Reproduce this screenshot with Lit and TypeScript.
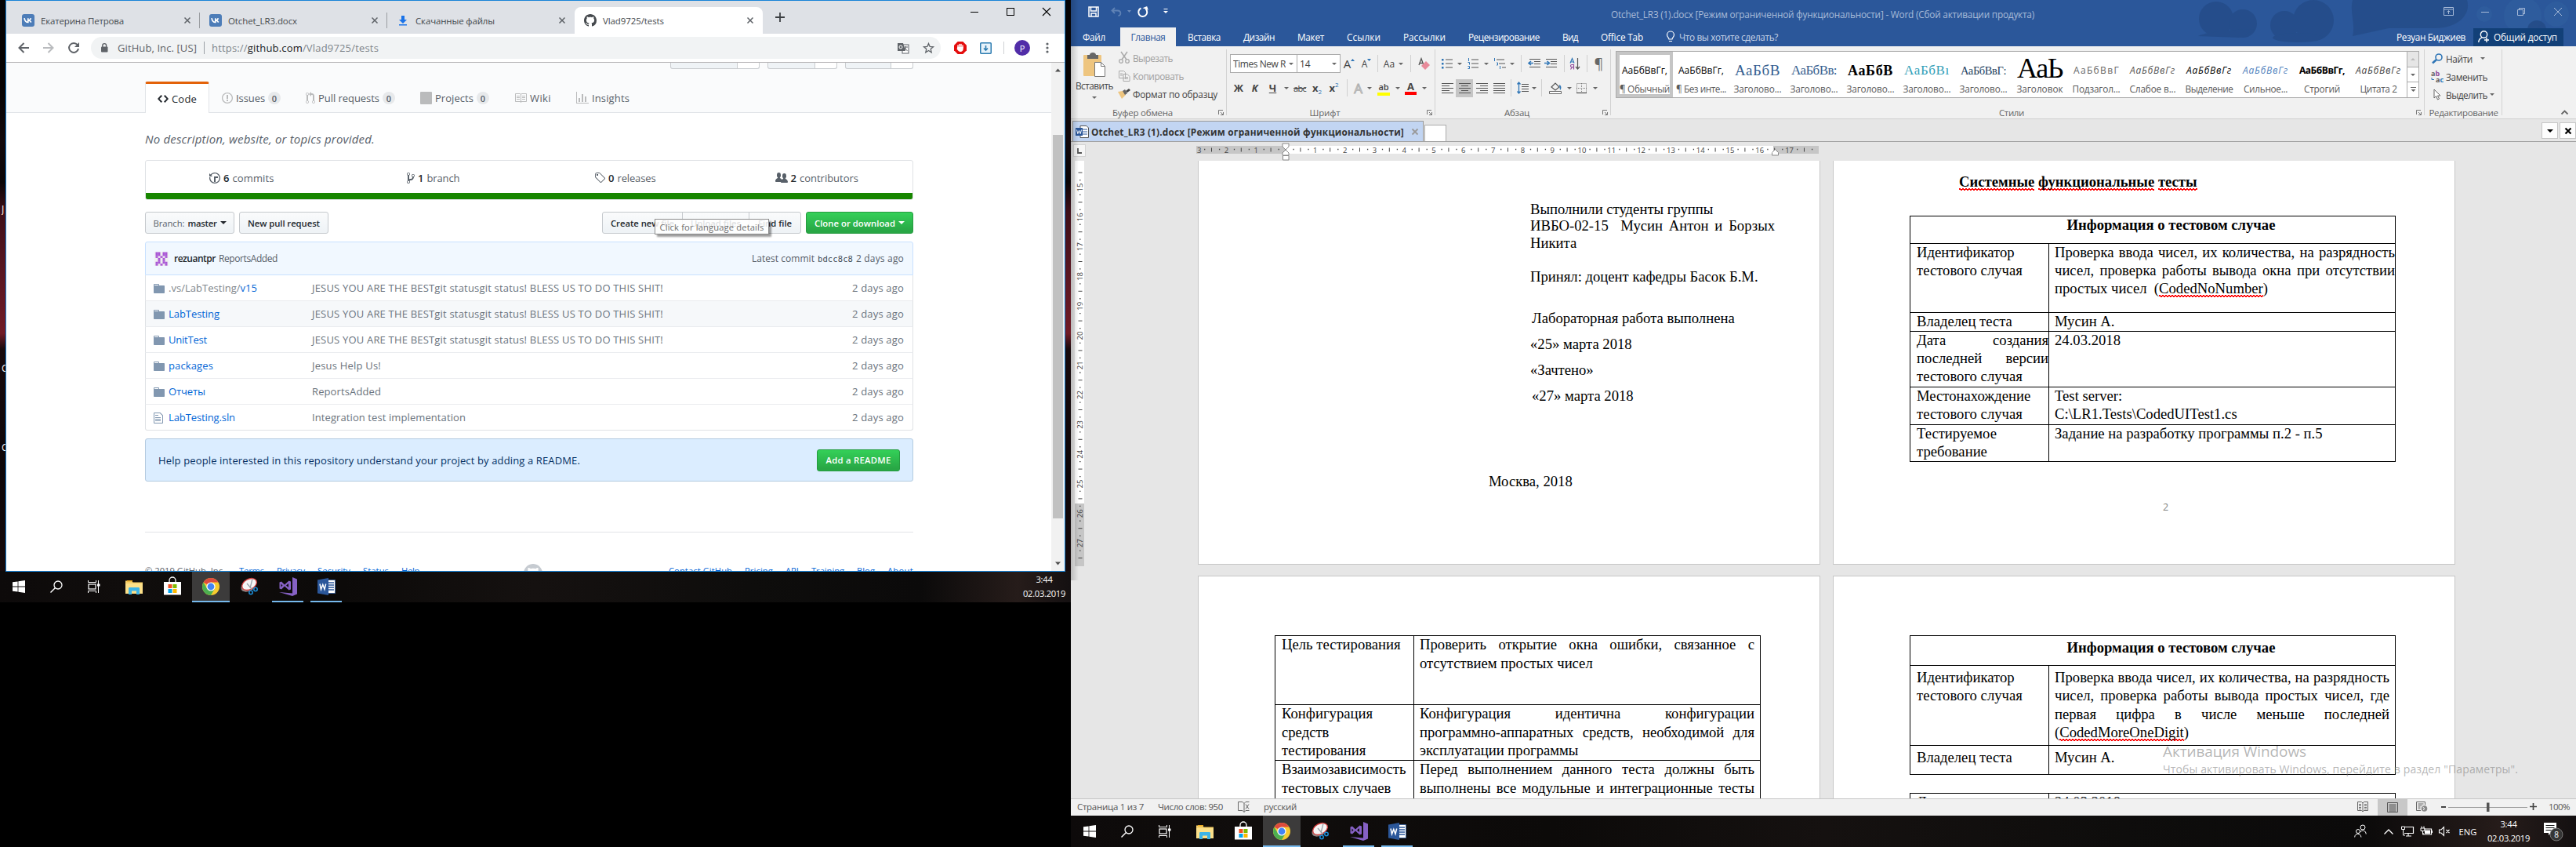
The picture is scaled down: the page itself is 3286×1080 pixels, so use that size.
import { LitElement, html, svg, css, nothing } from "lit";
import { customElement, property } from "lit/decorators.js";

/* ---------- shared helpers ---------- */

const base = css`
  * { box-sizing: border-box; }
  .row { display: flex; align-items: center; }
  .col { display: flex; flex-direction: column; }
  .grow { flex: 1; }
  .cell { display: flex; align-items: center; justify-content: center; flex: none; }
  svg { display: block; flex: none; overflow: visible; }
  .gap { flex: none; }
`;

/** Text whose tracking is adjusted so that it fills exactly `w` pixels. */
@customElement("fit-text")
class FitText extends LitElement {
  static styles = css`
    :host { display: inline-block; white-space: pre; flex: none; text-align: left; }
    .in { display: inline-block; }
  `;
  @property({ attribute: false }) w = 0;
  firstUpdated() {
    const el = this.renderRoot.querySelector(".in") as HTMLElement;
    const n = (this.textContent || "").length;
    const nat = el.getBoundingClientRect().width;
    if (this.w && n > 1) {
      el.style.letterSpacing = `${(this.w - nat) / n}px`;
      this.style.width = `${this.w}px`;
    }
  }
  render() {
    return html`<span class="in"><slot></slot></span>`;
  }
}

const t = (w: number, s: unknown, cls = "") => html`<fit-text .w=${w} class=${cls}>${s}</fit-text>`;
const cell = (w: number, c: unknown = nothing, cls = "") =>
  html`<span class="cell ${cls}" style="width:${w}px">${c}</span>`;
const gap = (w: number) => html`<span class="gap" style="width:${w}px"></span>`;
const ic = (w: number, h: number, c: unknown, cls = "") =>
  html`<svg class=${cls} width=${w} height=${h} viewBox="0 0 ${w} ${h}" fill="none">${c}</svg>`;
const oct = (w: number, d: string, cls = "") =>
  html`<svg class=${cls} width=${w} height="16" viewBox="0 0 ${w} 16" fill="currentColor"><path d=${d}></path></svg>`;

const O = {
  code: "M9.5 3L8 4.5 11.5 8 8 11.5 9.5 13 14 8 9.5 3zm-5 0L0 8l4.5 5L6 11.5 2.5 8 6 4.5 4.5 3z",
  issue: "M7 2.3c3.14 0 5.7 2.56 5.7 5.7s-2.56 5.7-5.7 5.7A5.71 5.71 0 0 1 1.3 8c0-3.14 2.56-5.7 5.7-5.7zM7 1C3.14 1 0 4.14 0 8s3.14 7 7 7 7-3.14 7-7-3.14-7-7-7zm1 3H6v5h2V4zm0 6H6v2h2v-2z",
  pr: "M11 11.28V5c-.03-.78-.34-1.47-.94-2.06C9.46 2.35 8.78 2.03 8 2H7V0L4 3l3 3V4h1c.27.02.48.11.69.31.21.2.3.42.31.69v6.28A1.993 1.993 0 0 0 10 15a1.993 1.993 0 0 0 1-3.72zm-1 2.92c-.66 0-1.2-.55-1.2-1.2 0-.65.55-1.2 1.2-1.2.65 0 1.2.55 1.2 1.2 0 .65-.55 1.2-1.2 1.2zM4 3c0-1.11-.89-2-2-2a1.993 1.993 0 0 0-1 3.72v6.56A1.993 1.993 0 0 0 2 15a1.993 1.993 0 0 0 1-3.72V4.72c.59-.34 1-.98 1-1.72zm-.8 10c0 .66-.55 1.2-1.2 1.2-.65 0-1.2-.55-1.2-1.2 0-.65.55-1.2 1.2-1.2.65 0 1.2.55 1.2 1.2zM2 4.2C1.34 4.2.8 3.65.8 3c0-.65.55-1.2 1.2-1.2.65 0 1.2.55 1.2 1.2 0 .65-.55 1.2-1.2 1.2z",
  project: "M10 12h3V2h-3v10zm-4-2h3V2H6v8zm-4 4h3V2H2v12zm-1 1h13V1H1v14zM14 0H1a1 1 0 0 0-1 1v14a1 1 0 0 0 1 1h13a1 1 0 0 0 1-1V1a1 1 0 0 0-1-1z",
  book: "M3 5h4v1H3V5zm0 3h4V7H3v1zm0 2h4V9H3v1zm11-5h-4v1h4V5zm0 2h-4v1h4V7zm0 2h-4v1h4V9zm2-6v9c0 .55-.45 1-1 1H9.5l-1 1-1-1H2c-.55 0-1-.45-1-1V3c0-.55.45-1 1-1h5.5l1 1 1-1H15c.55 0 1 .45 1 1zm-8 .5L7.5 3H2v9h6V3.5zm7-.5H9.5l-.5.5V12h6V3z",
  graph: "M16 14v1H0V0h1v14h15zM5 13H3V8h2v5zm4 0H7V3h2v10zm4 0h-2V6h2v7z",
  history: "M8 13H6V6h5v2H8v5zM7 1C4.81 1 2.87 2.02 1.59 3.59L0 2v4h4L2.5 4.5C3.55 3.17 5.17 2.3 7 2.3c3.14 0 5.7 2.56 5.7 5.7s-2.56 5.7-5.7 5.7A5.71 5.71 0 0 1 1.3 8c0-.34.03-.67.09-1H.08C.03 7.33 0 7.66 0 8c0 3.86 3.14 7 7 7s7-3.14 7-7-3.14-7-7-7z",
  branch: "M10 5c0-1.11-.89-2-2-2a1.993 1.993 0 0 0-1 3.72v.3c-.02.52-.23.98-.63 1.38-.4.4-.86.61-1.38.63-.83.02-1.48.16-2 .45V4.72a1.993 1.993 0 0 0-1-3.72C.88 1 0 1.89 0 3a2 2 0 0 0 1 1.72v6.56c-.59.35-1 .99-1 1.72 0 1.11.89 2 2 2 1.11 0 2-.89 2-2 0-.53-.2-1-.53-1.36.09-.06.48-.41.59-.47.25-.11.56-.17.94-.17 1.05-.05 1.95-.45 2.75-1.25S8.95 7.77 9 6.73h-.02C9.59 6.37 10 5.73 10 5zM2 1.8c.66 0 1.2.55 1.2 1.2 0 .65-.55 1.2-1.2 1.2C1.35 4.2.8 3.65.8 3c0-.65.55-1.2 1.2-1.2zm0 12.41c-.66 0-1.2-.55-1.2-1.2 0-.65.55-1.2 1.2-1.2.65 0 1.2.55 1.2 1.2 0 .65-.55 1.2-1.2 1.2zm6-8c-.66 0-1.2-.55-1.2-1.2 0-.65.55-1.2 1.2-1.2.65 0 1.2.55 1.2 1.2 0 .65-.55 1.2-1.2 1.2z",
  tag: "M7.685 1.72a2.49 2.49 0 0 0-1.76-.726H3.48A2.5 2.5 0 0 0 .994 3.48v2.456c0 .656.269 1.292.726 1.76l6.024 6.024a.99.99 0 0 0 1.402 0l4.563-4.563a.99.99 0 0 0 0-1.402L7.685 1.72zM2.366 7.048a1.54 1.54 0 0 1-.467-1.123V3.48c0-.874.716-1.58 1.58-1.58h2.456c.418 0 .825.159 1.123.467l6.104 6.094-4.702 4.702-6.094-6.114zm.626-4.066h1.989v1.989H2.982V2.982h.01z",
  org: "M16 12.999c0 .439-.45 1-1 1H7.995c-.539 0-.994-.447-.995-.999H1c-.54 0-1-.561-1-1 0-2.634 3-4 3-4s.229-.409 0-1c-.841-.621-1.058-.59-1-3 .058-2.419 1.367-3 2.5-3s2.442.58 2.5 3c.058 2.41-.159 2.379-1 3-.229.59 0 1 0 1s1.549.711 2.42 2.088C9.196 9.369 10 8.999 10 8.999s.229-.409 0-1c-.841-.62-1.058-.59-1-3 .058-2.419 1.367-3 2.5-3s2.437.581 2.495 3c.059 2.41-.158 2.38-1 3-.229.59 0 1 0 1s3.005 1.366 3.005 4z",
  dir: "M13 4H7V3c0-.66-.31-1-1-1H1c-.55 0-1 .45-1 1v10c0 .55.45 1 1 1h12c.55 0 1-.45 1-1V5c0-.55-.45-1-1-1zM6 4H1V3h5v1z",
  file: "M6 5H2V4h4v1zM2 8h7V7H2v1zm0 2h7V9H2v1zm0 2h7v-1H2v1zm10-7.5V14c0 .55-.45 1-1 1H1c-.55 0-1-.45-1-1V2c0-.55.45-1 1-1h7.5L12 4.5zM11 5L8 2H1v12h10V5z",
  mark: "M8 0C3.58 0 0 3.58 0 8c0 3.54 2.29 6.53 5.47 7.59.4.07.55-.17.55-.38 0-.19-.01-.82-.01-1.49-2.01.37-2.53-.49-2.69-.94-.09-.23-.48-.94-.82-1.13-.28-.15-.68-.52-.01-.53.63-.01 1.08.58 1.23.82.72 1.21 1.87.87 2.33.66.07-.52.28-.87.51-1.07-1.78-.2-3.64-.89-3.64-3.95 0-.87.31-1.59.82-2.15-.08-.2-.36-1.02.08-2.12 0 0 .67-.21 2.2.82.64-.18 1.32-.27 2-.27.68 0 1.36.09 2 .27 1.53-1.04 2.2-.82 2.2-.82.44 1.1.16 1.92.08 2.12.51.56.82 1.27.82 2.15 0 3.07-1.87 3.75-3.65 3.95.29.25.54.73.54 1.48 0 1.07-.01 1.93-.01 2.2 0 .21.15.46.55.38A8.013 8.013 0 0 0 16 8c0-4.42-3.58-8-8-8z",
};

/* ---------- Chrome window ---------- */

@customElement("chrome-window")
class ChromeWindow extends LitElement {
  static styles = [base, css`
    :host { display: flex; flex-direction: column; box-sizing: border-box; border: 1px solid #1883d7; background: #fff;
      font: 13px "Open Sans", "Noto Sans", sans-serif; color: #24292e; overflow: hidden; }
    .strip { display: flex; height: 42px; background: #dee1e6; padding-left: 8px; flex: none; }
    .tab { display: flex; align-items: center; width: 239px; height: 34px; margin-top: 8px; padding: 0 10px 0 12px;
      font-size: 11.5px; color: #45494d; }
    .tab.sep { background: linear-gradient(#9a9da1, #9a9da1) right center / 1px 20px no-repeat; }
    .tab.on { background: #fff; border-radius: 8px 8px 0 0; width: 240px; }
    .tab fit-text { margin-left: 8px; }
    .wb { display: flex; margin-left: auto; height: 28px; align-items: center; }
    .bar { display: flex; align-items: center; height: 36px; padding-left: 6px; flex: none; background: #fff; }
    .line { height: 1px; background: #b6b4b6; flex: none; }
    .omni { display: flex; align-items: center; width: 1084px; height: 28px; border-radius: 14px; background: #f1f3f4;
      margin-left: 6px; margin-right: 9px; font-size: 13px; color: #5f6368; }
    .osep { width: 1px; height: 16px; background: #9aa0a6; margin: 0 9px; }
    .lt { color: #80868b; } .dk { color: #202124; }
    .vsep { width: 1px; height: 16px; background: #cfd1d4; }
    .ava { width: 20px; height: 20px; border-radius: 10px; background: #512da8; color: #fff; font-size: 11px;
      display: flex; align-items: center; justify-content: center; }
    .view { display: flex; flex: 1; min-height: 0; }
    .page { flex: 1; overflow: hidden; }
    .scroll { width: 17px; background: #f1f1f1; display: flex; flex-direction: column; align-items: center; padding: 7px 0; }
    .thumb { width: 13px; height: 489px; background: #c1c1c1; margin-top: 80px; margin-bottom: auto; }
    .head { height: 64px; background: #fafbfc; border-bottom: 1px solid #e1e4e8; display: flex; flex-direction: column;
      justify-content: space-between; }
    .wrap { width: 980px; margin-left: 177px; }
    .stubs { display: flex; justify-content: flex-end; gap: 10px; height: 8px; }
    .stub { border: 1px solid #c9cccf; border-top: 0; border-radius: 0 0 3px 3px; display: flex; height: 8px; background: #eff3f6; }
    .stub i { width: 28px; margin-left: auto; background: #fff; border-left: 1px solid #c9cccf; border-radius: 0 0 3px 0; }
    .nav { display: flex; margin-bottom: -1px; height: 40px; color: #586069; }
    .nav .it { display: flex; align-items: center; padding: 2px 16px 0; gap: 4px; }
    .nav svg { color: #babbbc; }
    .nav .it.on { background: #fff; border: 1px solid #e1e4e8; border-bottom: 0; border-top: 3px solid #e36209; padding: 0 15px;
      border-radius: 3px 3px 0 0; color: #24292e; }
    .nav .it.on svg { color: #24292e; }
    .cnt { width: 16px; height: 16px; border-radius: 8px; background: #e7e9eb; font-size: 11px; font-weight: 600;
      display: flex; align-items: center; justify-content: center; }
    .desc { margin-top: 21px; height: 24px; line-height: 24px; font-size: 15px; font-style: italic; color: #586069; }
    .stats { margin-top: 15px; height: 51px; border: 1px solid #dfe2e5; border-radius: 3px; overflow: hidden; }
    .stats .r { display: flex; height: 41px; color: #586069; }
    .stats .s { flex: 1; display: flex; align-items: center; justify-content: center; gap: 4px; padding-top: 3px; }
    .stats b { font-weight: 600; color: #24292e; }
    .lang { height: 8px; background: #178600; }
    .btns { margin-top: 15px; display: flex; height: 28px; position: relative; }
    .btn { display: flex; align-items: center; justify-content: center; height: 28px; border: 1px solid #c5c9cd; border-radius: 3px; gap: 4px;
      background: linear-gradient(#fafbfc, #eff3f6 90%); font-size: 11.3px; font-weight: 600; color: #24292e; }
    .btn.g { color: #fff; border-color: #269b40; background: linear-gradient(#34d058, #28a745 90%); }
    .btn .m { font-weight: 400; color: #586069; }
    .b1 { width: 114px; margin-right: 6px; } .b2 { width: 114px; margin-right: auto; }
    .b3 { width: 103px; border-radius: 3px 0 0 3px; } .b4 { width: 86px; border-radius: 0; margin-left: -1px; }
    .b5 { width: 67px; border-radius: 0 3px 3px 0; margin-left: -1px; } .b6 { width: 137px; margin-left: 6px; }
    .tip { position: absolute; left: 650px; top: 9px; width: 146px; height: 20px; border: 1px solid #8d8d8d; background: rgba(255,255,255,.86);
      box-shadow: 3px 3px 2px rgba(0,0,0,.38); font-size: 11.2px; color: #6d6d6d; display: flex; align-items: center; justify-content: center; }
    .commit { margin-top: 10px; height: 43px; border: 1px solid #c8e1ff; border-radius: 3px 3px 0 0; background: #f1f8ff; display: flex;
      align-items: center; padding: 0 11px; font-size: 12px; color: #586069; }
    .commit b { font-weight: 600; color: #24292e; }
    .mono { font-family: "DejaVu Sans Mono", monospace; font-size: 10.5px; color: #444d56; margin: 0 4px; }
    .f { display: flex; align-items: center; height: 33px; border: 1px solid #dfe2e5; border-top: 0; padding: 0 11px 0 10px; color: #6a737d;
      border-bottom-color: #eaecef; }
    .f.h { background: #f6f8fa; }
    .f.z { border-bottom-color: #dfe2e5; border-radius: 0 0 3px 3px; }
    .f svg { color: #8197b0; margin-top: 1px; }
    .f .n { width: 202px; display: flex; align-items: center; color: #0366d6; }
    .f .ico { width: 19px; }
    .help { margin-top: 10px; height: 55px; border: 1px solid #b4cbe0; border-radius: 3px; background: #dbedff; display: flex;
      align-items: center; padding: 0 16px; color: #032f62; }
    .help .btn { width: 106px; margin-left: auto; }
    .hr { margin-top: 64px; height: 1px; background: #e1e4e8; }
    .foot { margin-top: 40px; display: flex; font-size: 11.2px; line-height: 18px; color: #586069; }
    .foot .l { color: #0366d6; margin-left: 16px; }
    .foot svg { margin: 0 auto 0 133px; color: #c6cbd1; }
  `];

  tab(icon: unknown, s: string, w: number, cls: string) {
    return html`<div class="tab ${cls}">${icon}${t(w, s)}<span class="grow"></span>
      ${cell(12, ic(8, 8, svg`<path d="M.5 .5l7 7M7.5 .5l-7 7" stroke="#5f6368" stroke-width="1.5"/>`))}</div>`;
  }
  vk = ic(16, 16, svg`<rect width="16" height="16" rx="3" fill="#4d7db8"/><path d="M3 5.2c.6 3.4 2 5.3 4.8 5.3V5.2M7.8 8c1.800-.1 3-1.300 3.600-2.800M7.800 8c2 .1 3.200 1.200 4 2.500" stroke="#fff" stroke-width="1.7"/>`);

  file(icon: "dir" | "file", nw: number, name: unknown, mw: number, msg: string, cls = "") {
    return html`<div class="f ${cls}"><div class="n"><span class="ico">${oct(icon === "dir" ? 14 : 12, O[icon])}</span>${t(nw, name)}</div>
      ${t(mw, msg)}<span class="grow"></span>${t(66, "2 days ago")}</div>`;
  }

  render() {
    const jesus = "JESUS YOU ARE THE BESTgit statusgit status! BLESS US TO DO THIS SHIT!";
    const px = ["11011", "11011", "10101", "01010", "01010", "11011", "10101"];
    return html`
      <div class="strip">
        ${this.tab(this.vk, "Екатерина Петрова", 106, "sep")}
        ${this.tab(this.vk, "Otchet_LR3.docx", 88, "sep")}
        ${this.tab(ic(16, 16, svg`<path d="M6 2h4v5h3l-5 5-5-5h3zM3 13h10v1.600H3z" fill="#1a73e8"/>`), "Скачанные файлы", 101, "")}
        ${this.tab(oct(16, O.mark), "Vlad9725/tests", 78, "on")}
        ${cell(44, ic(12, 12, svg`<path d="M6 0v12M0 6h12" stroke="#3c4043" stroke-width="1.800"/>`))}
        <div class="wb">
          ${cell(46, ic(10, 10, svg`<path d="M0 5.500h10" stroke="#000"/>`))}
          ${cell(46, ic(10, 10, svg`<rect x=".5" y=".5" width="9" height="9" stroke="#000"/>`))}
          ${cell(46, ic(10, 10, svg`<path d="M0 0l10 10M10 0L0 10" stroke="#000" stroke-width="1.100"/>`))}
        </div>
      </div>
      <div class="bar">
        ${cell(32, ic(14, 14, svg`<path d="M14 7H1.500M7.500 1L1.500 7l6 6" stroke="#5f6368" stroke-width="2"/>`))}
        ${cell(32, ic(14, 14, svg`<path d="M0 7h12.500M6.500 1l6 6-6 6" stroke="#b9bbbe" stroke-width="2"/>`))}
        ${cell(32, ic(14, 14, svg`<path d="M11.800 3.200A6 6 0 1 0 13 8" stroke="#5f6368" stroke-width="2"/><path d="M14 0v6H8z" fill="#5f6368"/>`))}
        <div class="omni">
          ${cell(34, ic(10, 12, svg`<rect x="1" y="4.500" width="8.500" height="7" rx="1" fill="#5f6368"/><path d="M2.800 5V3a2.400 2.400 0 0 1 4.800 0v2" stroke="#5f6368" stroke-width="1.400"/>`))}
          ${t(101, "GitHub, Inc. [US]")}
          <span class="osep"></span>
          ${t(213, html`<span class="lt">https://</span><span class="dk">github.com</span><span class="lt">/Vlad9725/tests</span>`)}
          <span class="grow"></span>
          ${cell(32, ic(15, 15, svg`<rect x="6" y="3" width="8" height="11" stroke="#5f6368" fill="#fff"/><path d="M0 1h7l3 10H0z" fill="#5f6368"/><circle cx="4" cy="6" r="2" stroke="#fff"/><path d="M8 6h5M10.500 5v1l-2 5M9 7l3.500 4" stroke="#5f6368"/>`))}
          ${cell(32, ic(15, 15, svg`<path d="M7.500 1.500l1.700 4 4.300.3-3.300 2.800 1 4.200-3.700-2.300-3.700 2.300 1-4.200L1.500 5.800l4.300-.3z" stroke="#5f6368" stroke-width="1.300"/>`))}
        </div>
        ${cell(32, ic(16, 16, svg`<path d="M4.700 0h6.600L16 4.700v6.600L11.300 16H4.700L0 11.300V4.700z" fill="#e40d0d"/><path d="M5 8V5M7 7V3.500M9 7V3.500M11 8V5" stroke="#fff" stroke-width="1.500" stroke-linecap="round"/><path d="M4.300 7h7.400v2.500c0 2-1.500 3.500-3.500 3.500-2 0-3.200-1.200-4.500-3.500z" fill="#fff"/>`))}
        ${cell(32, ic(15, 15, svg`<rect x=".75" y=".75" width="13.500" height="13.500" rx="1" fill="#e8f3fa" stroke="#2b7bb0" stroke-width="1.500"/><path d="M7.500 4v6M5 7.500L7.500 10 10 7.500" stroke="#2b7bb0" stroke-width="1.600"/>`))}
        ${cell(14, html`<span class="vsep"></span>`)}
        ${cell(34, html`<span class="ava">P</span>`)}
        ${cell(30, ic(4, 14, svg`<circle cx="2" cy="2" r="1.600" fill="#5f6368"/><circle cx="2" cy="7" r="1.600" fill="#5f6368"/><circle cx="2" cy="12" r="1.600" fill="#5f6368"/>`))}
      </div>
      <div class="line"></div>
      <div class="view">
        <div class="page">
          <div class="head">
            <div class="wrap stubs">
              ${[114, 89, 87].map((w) => html`<span class="stub" style="width:${w}px"><i></i></span>`)}
            </div>
            <div class="wrap nav">
              <div class="it on">${oct(14, O.code)}${t(32, "Code")}</div>
              <div class="it">${oct(14, O.issue)}${t(37, "Issues")}<span class="cnt">0</span></div>
              <div class="it">${oct(12, O.pr)}${t(78, "Pull requests")}<span class="cnt">0</span></div>
              <div class="it">${oct(15, O.project)}${t(49, "Projects")}<span class="cnt">0</span></div>
              <div class="it">${oct(16, O.book)}${t(27, "Wiki")}</div>
              <div class="it">${oct(16, O.graph)}${t(48, "Insights")}</div>
            </div>
          </div>
          <div class="wrap">
            <div class="desc">${t(293, "No description, website, or topics provided.")}</div>
            <div class="stats">
              <div class="r">
                <div class="s">${oct(14, O.history)}<b>6</b>${t(53, "commits")}</div>
                <div class="s">${oct(10, O.branch)}<b>1</b>${t(42, "branch")}</div>
                <div class="s">${oct(14, O.tag)}<b>0</b>${t(49, "releases")}</div>
                <div class="s">${oct(16, O.org)}<b>2</b>${t(75, "contributors")}</div>
              </div>
              <div class="lang"></div>
            </div>
            <div class="btns">
              <span class="btn b1">${t(40, "Branch:", "m")}${t(37, "master")}${ic(8, 4, svg`<path d="M0 0h8L4 4z" fill="#24292e"/>`)}</span>
              <span class="btn b2">${t(92, "New pull request")}</span>
              <span class="btn b3">${t(81, "Create new file")}</span>
              <span class="btn b4">${t(64, "Upload files")}</span>
              <span class="btn b5">${t(43, "Find file")}</span>
              <span class="btn g b6">${t(103, "Clone or download")}${ic(8, 4, svg`<path d="M0 0h8L4 4z" fill="#fff"/>`)}</span>
              <span class="tip">${t(133, "Click for language details")}</span>
            </div>
            <div class="commit">
              ${ic(18, 18, svg`<rect width="18" height="18" fill="#f0f0f0"/>${px.map((r, y) => [...r].map((c, x) => c === "1" ? svg`<rect x=${1.5 + x * 3} y=${0.5 + y * 2.45} width="3" height="2.500" fill="#a957d6"/>` : nothing))}`)}
              ${gap(7)}<b>${t(53, "rezuantpr")}</b>${gap(4)}${t(75, "ReportsAdded")}
              <span class="grow"></span>${t(80, "Latest commit")}${t(45, "bdcc8c8", "mono")}${t(61, "2 days ago")}
            </div>
            ${this.file("dir", 113, html`<span class="lt">.vs/LabTesting/</span>v15`, 448, jesus)}
            ${this.file("dir", 65, "LabTesting", 448, jesus, "h")}
            ${this.file("dir", 49, "UnitTest", 448, jesus)}
            ${this.file("dir", 57, "packages", 88, "Jesus Help Us!")}
            ${this.file("dir", 47, "Отчеты", 88, "ReportsAdded")}
            ${this.file("file", 85, "LabTesting.sln", 196, "Integration test implementation", "z")}
            <div class="help">${t(538, "Help people interested in this repository understand your project by adding a README.")}<span class="btn g">${t(83, "Add a README")}</span></div>
            <div class="hr"></div>
            <div class="foot">
              ${t(102, "© 2019 GitHub, Inc.")}${gap(2)}${[["Terms", 32], ["Privacy", 36], ["Security", 42], ["Status", 33], ["Help", 23]].map(([s, w]) => t(w as number, s, "l"))}
              <svg width="24" height="24" viewBox="0 0 16 16" fill="currentColor"><path d=${O.mark}></path></svg>
              ${[["Contact GitHub", 81], ["Pricing", 36], ["API", 17], ["Training", 42], ["Blog", 23], ["About", 33]].map(([s, w]) => t(w as number, s, "l"))}
            </div>
          </div>
        </div>
        <div class="scroll">
          ${ic(7, 5, svg`<path d="M0 4.500h7L3.500 .5z" fill="#505050"/>`)}
          <span class="thumb"></span>
          ${ic(7, 5, svg`<path d="M0 .5h7L3.500 4.500z" fill="#505050"/>`)}
        </div>
      </div>`;
  }
}

/* ---------- Windows taskbar ---------- */

@customElement("task-bar")
class TaskBar extends LitElement {
  @property({ type: Boolean }) tray = false;
  static styles = [base, css`
    :host { display: flex; height: 40px; color: #fff; font: 11.2px "Open Sans", sans-serif;
      background: linear-gradient(90deg, #0d0a0a, #100d0c 12%, #0c0a09 32%, #151110 50%, #0e0d0c 70%, #0b0a0a 86%, #261c1a 95%, #141011); }
    .app { width: 48px; height: 40px; display: flex; align-items: center; justify-content: center; margin-right: 1px; flex: none; }
    .app.run { background: linear-gradient(#76b9ed, #76b9ed) center bottom / 40px 2px no-repeat; }
    .app.on { background: linear-gradient(#76b9ed, #76b9ed) center bottom / 48px 2px no-repeat, #3c3b3b; }
    .clock { width: 68px; display: flex; flex-direction: column; align-items: center; justify-content: center; line-height: 18px; }
    .cell { height: 40px; }
    .badge { font-size: 10px; }
  `];
  render() {
    return html`
      ${cell(48, ic(16, 16, svg`<path d="M0 2.300L6.600 1.400v6.100H0zM7.400 1.300L16 0v7.500H7.400zM0 8.400h6.600v6.200L0 13.700zM7.400 8.400H16V16l-8.600-1.300z" fill="#fff"/>`))}
      ${cell(48, ic(16, 16, svg`<circle cx="10" cy="6" r="5" stroke="#fff" stroke-width="1.300"/><path d="M6.500 9.500L.5 15.500" stroke="#fff" stroke-width="1.400"/>`))}
      ${cell(48, ic(16, 16, svg`<path d="M.5 0v2.500h10V0M.5 16v-2.500h10V16M13.500 0v16" stroke="#fff"/><rect x="1" y="5" width="9" height="6" stroke="#fff" stroke-width="1.200"/><rect x="12" y="4.500" width="3.500" height="3" fill="#fff"/>`))}
      ${gap(3)}
      <span class="app">${ic(22, 19, svg`<path d="M0 1.500h8l1.500 2H22V18H0z" fill="#f5d06b"/><path d="M0 5h22v13H0z" fill="#fce089"/><path d="M2 1h7v1.500H2z" fill="#e9a820"/><path d="M4 19v-7.500c0-1 .5-1.500 1.500-1.500h11c1 0 1.500.5 1.500 1.500V19h-4v-4.500H8V19z" fill="#3db4e7"/>`)}</span>
      <span class="app">${ic(22, 24, svg`<path d="M7 7V4a4 4 0 0 1 8 0v3" stroke="#fff" stroke-width="1.300"/><path d="M0 6h22v16.500H0z" fill="#fff"/><path d="M5.500 9h5v5h-5z" fill="#f25022"/><path d="M11.500 9h5v5h-5z" fill="#7fba00"/><path d="M5.500 15h5v5h-5z" fill="#00a4ef"/><path d="M11.500 15h5v5h-5z" fill="#ffb900"/>`)}</span>
      <span class="app on">${ic(22, 22, svg`<circle cx="11" cy="11" r="11" fill="#f7cb2f"/><path d="M11 11L1.500 5.500A11 11 0 0 1 20.500 5.500H11z" fill="#dd4b3e"/><path d="M1.500 5.500A11 11 0 0 0 11 22l4.800-8.300L11 11l-4.800 2.800z" fill="#4caf50"/><circle cx="11" cy="11" r="5.600" fill="#fff"/><circle cx="11" cy="11" r="4.400" fill="#4285f4"/>`)}</span>
      <span class="app">${ic(24, 22, svg`<ellipse cx="10.500" cy="10.500" rx="10" ry="6.500" fill="#8d8583" transform="rotate(-28 10 10)"/><ellipse cx="12" cy="8" rx="10" ry="6.600" fill="#f5f5f5" stroke="#d43c3c" stroke-width="1.300" transform="rotate(-28 12 8)"/><path d="M16 1l-3 12M9 7l7 8" stroke="#9aa3ab" stroke-width="1.300"/><circle cx="14" cy="18.500" r="2.200" stroke="#1a8ad4" stroke-width="1.600"/><circle cx="20" cy="14.500" r="2.200" stroke="#1a8ad4" stroke-width="1.600"/>`)}</span>
      <span class="app run">${ic(24, 24, svg`<path d="M18 0l6 2.500v19L18 24 1 19l17 1.500z" fill="#8661c5"/><path d="M1.500 6.500L4 5.500l4 4 5.500-5 2.500 1v10l-2.500 1-5.500-5-4 4-2.500-1zM3.500 8.500v4l2-2zM13 8l-3 2.500 3 2.500z" fill="#8661c5" fill-rule="evenodd"/>`)}</span>
      <span class="app run">${ic(23, 22, svg`<path d="M12 2.500h10.500v17H12z" fill="#fff" stroke="#2b579a" stroke-width=".8"/><path d="M14 6h7M14 9h7M14 12h7M14 15h7" stroke="#2b579a" stroke-width="1.400"/><path d="M0 2.500L14 0v22L0 19.500z" fill="#2b579a"/><path d="M3 7.500l1.500 7L6.800 8.500l2.200 6 1.700-7" stroke="#fff" stroke-width="1.500"/>`)}</span>
      <span class="grow"></span>
      ${this.tray ? html`
        ${cell(32, ic(16, 18, svg`<circle cx="5" cy="9" r="2.500" stroke="#fff"/><path d="M.7 16.500c0-5.500 8-5.500 8.200 0" stroke="#fff"/><circle cx="11" cy="4" r="3" stroke="#fff"/><path d="M8 9.500c3-3 7-1 7.200 3" stroke="#fff"/>`))}
        ${gap(8)}
        ${cell(24, ic(12, 7, svg`<path d="M.5 6.500L6 1l5.500 5.500" stroke="#fff" stroke-width="1.300"/>`))}
        ${cell(24, ic(16, 14, svg`<path d="M4 1.500h11.500v8H4M9 10v3M6 13h7" stroke="#fff" stroke-width="1.200"/><path d="M.5 1h4v3.500h-4zM2.500 5v7H5" stroke="#fff"/>`))}
        ${cell(24, ic(16, 14, svg`<path d="M5 4h9.500v7H4V9" stroke="#fff" stroke-width="1.200"/><path d="M6 5.500h7v4.500H6zM14.500 6H16v3h-1.500z" fill="#fff"/><path d="M1 3h5v3.500H1zM2 .5V3M5 .5V3M3.500 7v4" stroke="#fff"/>`))}
        ${cell(23, ic(15, 12, svg`<path d="M.5 4h2.500l3.500-3.500v11L3 8H.5zM9.500 4l4 4M13.500 4l-4 4" stroke="#fff" stroke-width="1.100"/>`))}
        ${cell(36, t(23, "ENG"))}` : nothing}
      <div class="clock">${t(21, "3:44")}${t(54, "02.03.2019")}</div>
      ${this.tray ? html`
        ${cell(46, ic(24, 26, svg`<path d="M0 2h16v13H9l-3 3v-3H0z" fill="#fff"/><path d="M2.500 5.500h11M2.500 8.500h11M2.500 11.500h7" stroke="#111" stroke-width="1.100"/><circle cx="16" cy="17" r="8" fill="#353535" stroke="#8a8a8a" stroke-width=".8"/><text class="badge" x="16" y="20.700" text-anchor="middle" fill="#fff">8</text>`))}
        ${gap(6)}` : nothing}`;
  }
}

/* ---------- Word window ---------- */

type Line = { s: unknown; j?: boolean };
type Row = { h: number; a: Line[]; b?: Line[]; wide?: boolean };
const L = (s: unknown): Line => ({ s });
const J = (s: unknown): Line => ({ s, j: true });
const sq = (s: string) => html`<span class="sq">${s}</span>`;

@customElement("word-window")
class WordWindow extends LitElement {
  static styles = [base, css`
    :host { display: flex; flex-direction: column; box-sizing: border-box; background: #e6e6e6; overflow: hidden; position: relative;
      font: 12px "Open Sans", "Noto Sans", sans-serif; color: #444; }
    .blue { background: #2b579a; height: 59px; flex: none; position: relative; }
    .clouds { position: absolute; right: 0; top: 0; }
    .title { display: flex; align-items: center; height: 35px; padding-bottom: 6px; position: relative; }
    .title fit-text { color: #a8bbd8; font-size: 11.800px; margin-top: 6px; }
    .tabs { display: flex; align-items: center; height: 24px; color: #fff; font-size: 11.800px; position: relative; }
    .home { width: 71px; height: 24px; background: #f1f1f1; color: #2b579a; display: flex; align-items: center; justify-content: center; }
    .ask { color: #c5d2e6; }
    .share { width: 115px; height: 23px; background: #124078; display: flex; align-items: center; margin: 0 16px 0 10px; }
    .ribbon { height: 93px; background: #f1f1f1; border-bottom: 1px solid #d2d2d2; display: flex; flex: none; }
    .grp { display: flex; flex-direction: column; background: linear-gradient(#d2d2d2, #d2d2d2) right 4px / 1px 84px no-repeat; flex: none; }
    .body { height: 77px; display: flex; }
    .lab { height: 15px; display: flex; align-items: center; color: #666; font-size: 11.500px; }
    .lab .c { flex: 1; display: flex; justify-content: center; }
    .clip { padding-top: 3px; font-size: 11.800px; }
    .paste { width: 57px; display: flex; flex-direction: column; align-items: center; padding: 5px 0 0 3px; }
    .paste fit-text { line-height: 20px; }
    .paste svg:last-child { margin-top: 4px; }
    .item { display: flex; align-items: center; height: 23px; }
    .dis { color: #a0a0a0; }
    .tools { flex-direction: column; padding-top: 10px; gap: 7px; }
    .tools .row { height: 24px; }
    .combo { height: 24px; border: 1px solid #ababab; background: #fff; display: flex; align-items: center; padding-left: 3px;
      justify-content: space-between; padding-right: 4px; overflow: hidden; margin-right: -1px; }
    .combo .tx { overflow: hidden; white-space: nowrap; }
    .vs { width: 1px; height: 22px; background: #d0d0d0; }
    .bb { font-weight: 700; font-size: 13px; color: #444; }
    .it { font-style: italic; } .un { text-decoration: underline; } .st { text-decoration: line-through; font-size: 11px; letter-spacing: -.7px; }
    .sm { font-size: 8px; color: #2e75b6; } .sub { padding-top: 8px; } .sup { padding-bottom: 9px; }
    .lg { font-size: 15px; } .ol { color: #f1f1f1; font-size: 17px; -webkit-text-stroke: 1px #b0b0b0; }
    .sel { background: #c5c5c5; height: 23px; }
    .hl { border-bottom: 4px solid #ff0; font-size: 11px; line-height: 15px; padding: 0 1px; font-weight: 600; }
    .rd { border-bottom: 4px solid #f00; font-size: 13px; line-height: 14px; padding: 0 3px; font-weight: 700; }
    .pil { font-size: 18px; color: #666; }
    .gal { display: flex; margin: 6px 0 0 6px; height: 60px; border: 1px solid #ababab; background: #fff; }
    .sty { width: 72px; height: 58px; display: flex; flex-direction: column; align-items: center; flex: none; color: #5a5a5a; }
    .sty.on { outline: 4px solid #c5c5c5; outline-offset: -4px; }
    .pv { height: 35px; width: 60px; overflow: hidden; display: flex; align-items: flex-end; white-space: nowrap; margin-top: 1px; padding-left: 1px; line-height: 24px; }
    .lb { height: 22px; display: flex; align-items: center; font-size: 11.800px; }
    .ser { font-family: "Liberation Serif", serif; }
    .p0 { color: #000; font-size: 12px; } .p2 { color: #365f91; font-size: 19px; } .p3 { color: #365f91; font-size: 17px; }
    .p4 { color: #000; font-size: 18px; font-weight: 700; } .p5 { color: #31a0b8; font-size: 17px; } .p6 { color: #243f60; font-size: 14.500px; }
    .p7 { color: #000; font-size: 36px; line-height: 30px; } .p8 { color: #666; font-size: 12px; } .p9 { color: #555; font-size: 12px; font-style: italic; }
    .p10 { color: #000; font-size: 12px; font-style: italic; } .p11 { color: #4f81bd; font-size: 12px; font-style: italic; }
    .p12 { color: #000; font-size: 12px; font-weight: 700; } .p13 { color: #444; font-size: 12px; font-style: italic; }
    .gs { width: 15px; border-left: 1px solid #ababab; display: flex; flex-direction: column; }
    .gs span { flex: 1; display: flex; align-items: center; justify-content: center; border-bottom: 1px solid #ababab; }
    .gs span:first-child { background: #e6e6e6; } .gs span:last-child { border: 0; }
    .ed { flex-direction: column; padding: 4px 0 0 5px; font-size: 11.800px; }
    .rend { flex: 1; display: flex; align-items: flex-end; justify-content: flex-end; padding: 0 10px 5px 0; }
    .docs { height: 29px; border-bottom: 1px solid #a0a0a0; display: flex; align-items: flex-end; padding-left: 2px; flex: none; }
    .doc { width: 448px; height: 26px; background: #c2d5f2; border: 1px solid #9a9a9a; border-bottom: 0; display: flex; align-items: center;
      font-weight: 700; font-size: 11.800px; color: #333; padding-left: 3px; }
    .nt { width: 28px; height: 21px; background: #fff; border: 1px solid #ababab; border-bottom: 0; margin-left: 1px; }
    .db { width: 21px; height: 21px; background: #fdfdfd; border: 1px solid #c6c6c6; display: flex; align-items: center; justify-content: center;
      margin: 0 0 3px 2px; }
    .ruler { height: 24px; display: flex; flex: none; padding: 3px 0 0 3px; }
    .lbox { width: 16px; height: 16px; background: #f6f6f6; border: 1px solid #d2d2d2; display: flex; align-items: center; justify-content: center; }
    .cm { margin: -3px 0 0 125px; }
    .rt { font: 9.500px "Open Sans", sans-serif; }
    .work { flex: 1; display: flex; min-height: 0; overflow: hidden; }
    .vr { margin-left: 5px; width: 157px; }
    .pages { display: grid; grid-template-columns: 794px 794px; grid-template-rows: 515px 284px; gap: 14px 16px; }
    .pg { background: #fff; border: 1px solid #c6c6c6; font: 18.670px "Liberation Serif", serif; color: #000; line-height: 23px; overflow: hidden; }
    .pg.top { border-top: 0; }
    .pg.l3, .pg.l4 { border-bottom: 0; }
    .p1 { line-height: 21.350px; padding: 51px 0 0 423px; }
    .p1 .jj { width: 312px; }
    .jj { text-align: justify; text-align-last: justify; }
    .pr { white-space: pre; }
    .m1 { margin-top: 22px; } .m2 { margin-top: 32px; } .m3 { margin-top: 11.500px; } .m4 { margin: 88px 0 0 -53px; }
    .off { padding-left: 2px; }
    .hd { padding: 15px 0 0 160px; font-weight: 700; margin-bottom: 32px; }
    .sq { background:
        linear-gradient(45deg, transparent 38%, #f00 38% 62%, transparent 62%) 0 100% / 4px 3px repeat-x,
        linear-gradient(-45deg, transparent 38%, #f00 38% 62%, transparent 62%) 2px 100% / 4px 3px repeat-x; padding-bottom: 1px; }
    .tb { width: 620px; margin-left: 97px; border: 1px solid #000; border-top: 0; }
    .tr { display: grid; grid-template-columns: 176px 1fr; border-top: 1px solid #000; }
    .tr.one { grid-template-columns: 1fr; }
    .tr > div { padding-left: 8px; margin-top: -1px; padding-top: var(--pt, 0px); min-width: 0; white-space: nowrap; }
    .tr .jj { white-space: normal; }
    .tr > div + div { border-left: 1px solid #000; padding-left: 7px; padding-right: 7px; }
    .tr.wide > div + div { padding-right: 0; }
    .tr > div:first-child { padding-right: 7px; }
    .tr.wide > div:first-child { padding-right: 0; }
    .tr.one > div { text-align: center; font-weight: 700; padding-left: 54px; }
    .lo { --pt: 4px; line-height: 23.300px; }
    .l3 { line-height: 23.600px; padding-top: 75px; }
    .l4 { padding-top: 75px; }
    .next { margin-top: 23px; }
    .num { font: 12.500px "Open Sans", sans-serif; color: #808080; margin: 49px 0 0 420px; }
    .wm { position: absolute; left: 1393px; top: 944px; color: rgba(120,120,120,.55); display: flex; flex-direction: column; }
    .w1 { font-size: 19px; line-height: 28px; } .w2 { font-size: 14px; line-height: 18px; }
    .status { height: 22px; background: #f1f1f1; border-top: 1px solid #c6c6c6; display: flex; align-items: center; flex: none;
      font-size: 11.500px; color: #555; padding-bottom: 2px; }
    .status .on { background: #c8c8c8; height: 21px; margin-bottom: -2px; }
    .shade { position: absolute; left: 0; top: 0; width: 10px; height: 740px; background: linear-gradient(90deg, rgba(0,0,0,.18), transparent); }
  `];

  grp(w: number, lw: number, lab: string, body: unknown, launch = true) {
    return html`<div class="grp" style="width:${w}px">${body}
      <div class="lab"><span class="c">${t(lw, lab)}</span>${launch ? cell(16, ic(7, 7, svg`<path d="M.5 6V.5H6" stroke="#777"/><path d="M3 3l3 3M6.500 3v3.500H3" stroke="#777"/>`)) : nothing}</div></div>`;
  }
  arr(w: number) { return cell(w, ic(6, 3, svg`<path d="M0 0h6L3 3z" fill="#666"/>`)); }
  vs(w: number) { return cell(w, html`<span class="vs"></span>`); }
  bars(ws: number[][]) { return ic(15, 15, svg`${ws.map(([x, w], i) => svg`<path d="M${x} ${1.5 + i * 3}h${w}" stroke="#555"/>`)}`); }

  lines(ls: Line[]) { return html`<div>${ls.map((l) => html`<div class=${l.j ? "jj" : ""}>${l.s}</div>`)}</div>`; }
  table(rows: Row[], cls = "") {
    return html`<div class="tb ${cls}">${rows.map((r) => html`<div class="tr ${r.b ? "" : "one"} ${r.wide ? "wide" : ""}" style="height:${r.h}px">${this.lines(r.a)}${r.b ? this.lines(r.b) : nothing}</div>`)}</div>`;
  }

  hruler() {
    const o = [];
    const cm = 37.8, z = 130;
    for (let i = -3; i <= 17; i++) {
      const x = z + i * cm;
      if (i !== 0) o.push(svg`<text class="rt" x=${i === -3 ? x + 3 : x} y="13.500" text-anchor="middle" fill="#444">${Math.abs(i)}</text>`);
      o.push(svg`<path d="M${x + cm / 4} 9.500h1.300M${x + (cm * 3) / 4} 9.500h1.300" stroke="#444" stroke-width="1.300"/><path d="M${x + cm / 2} 7.500v5" stroke="#444"/>`);
    }
    return html`<svg class="cm" width="830" height="24" viewBox="0 0 830 24">
      <rect x="16" y="5" width="114" height="10" fill="#c6c6c6"/><rect x="130" y="5" width="622" height="10" fill="#fff"/><rect x="752" y="5" width="58" height="10" fill="#c6c6c6"/>
      ${o}
      <path d="M126 2h8v4l-4 4 4 4v3h-8v-3l4-4-4-4zM126.500 17.500h7.500v5.500h-7.500z" fill="#fff" stroke="#888"/>
      <path d="M754.500 9.500l4 4v3.500h-8v-3.500z" fill="#fff" stroke="#888"/></svg>`;
  }
  vruler() {
    const o = [];
    const cm = 37.8;
    for (let i = 14; i <= 27; i++) {
      const y = 34 + (i - 15) * cm;
      if (i > 14) o.push(svg`<text class="rt" transform="translate(10 ${y}) rotate(-90)" text-anchor="middle" fill="#444">${i}</text>`);
      o.push(svg`${i > 14 ? svg`<path d="M6 ${y + cm / 4}h1.500" stroke="#444" stroke-width="1.300"/>` : nothing}<path d="M4.500 ${y + cm / 2}h5" stroke="#444"/>${i < 27 ? svg`<path d="M6 ${y + (cm * 3) / 4}h1.500" stroke="#444" stroke-width="1.300"/>` : nothing}`);
    }
    return html`<svg width="12" height="520" viewBox="0 0 12 520"><rect width="12" height="437" fill="#fff"/><rect y="437" width="12" height="80" fill="#c6c6c6"/>${o}</svg>`;
  }

  render() {
    const b = "#2e75b6";
    const styles: [string, number, string, string, number][] = [
      ["p0", 58, "АаБбВвГг,", "¶ Обычный", 64], ["p0", 58, "АаБбВвГг,", "¶ Без инте...", 64], ["ser p2", 58, "АаБбВ", "Заголово...", 61],
      ["ser p3", 58, "АаБбВв:", "Заголово...", 61], ["ser p4", 58, "АаБбВ", "Заголово...", 61], ["ser p5", 58, "АаБбВı", "Заголово...", 61],
      ["ser p6", 58, "АаБбВвГ:", "Заголово...", 61], ["ser p7", 58, "АаЬ", "Заголовок", 59], ["p8", 59, "АаБбВвГ", "Подзагол...", 61],
      ["p9", 58, "АаБбВвГг", "Слабое в...", 59], ["p10", 58, "АаБбВвГг", "Выделение", 61], ["p11", 58, "АаБбВвГг", "Сильное...", 56],
      ["p12", 58, "АаБбВвГг,", "Строгий", 46], ["p13", 58, "АаБбВвГг", "Цитата 2", 47]];
    return html`
      <div class="blue">
        <svg class="clouds" width="500" height="59" viewBox="0 0 500 59">
          <g fill="#234a85" opacity=".7"><circle cx="41" cy="24" r="22"/><circle cx="75" cy="30" r="18"/><path d="M18 46c10-6 60-10 72-8l-20 10z"/>
          <circle cx="165" cy="26" r="26"/><circle cx="128" cy="32" r="18"/><ellipse cx="145" cy="48" rx="32" ry="6"/>
          <path d="M215 0h146c6 20-14 36-40 36h-60l-46 10c4-16-4-30 0-46z"/></g>
          <g fill="#30609f" opacity=".6"><circle cx="432" cy="20" r="24"/><circle cx="383" cy="18" r="10"/><circle cx="475" cy="18" r="16"/></g>
          <circle cx="450" cy="38" r="12" fill="#234a85" opacity=".8"/></svg>
        <div class="title">
          ${gap(14)}${cell(30, ic(14, 14, svg`<path d="M1 1h12v12H1zM3.500 1v5h7V1M4 13V9h6v4" stroke="#fff" stroke-width="1.500"/>`))}
          ${gap(2)}${cell(24, ic(14, 12, svg`<path d="M5 1L1.500 4.500 5 8M2 4.500h6.500c5 0 5 6.500 1 6.500" stroke="#5f82b5" stroke-width="1.800"/>`))}${cell(8, ic(5, 3, svg`<path d="M0 0h5L2.500 3z" fill="#6d8dbc"/>`))}
          ${gap(4)}${cell(20, ic(14, 14, svg`<path d="M4.500 2.500A5.500 5.500 0 1 0 10.500 3.500" stroke="#fff" stroke-width="2"/><path d="M7 1h6v5z" fill="#fff" transform="rotate(-20 10 3)"/>`))}
          ${gap(9)}${cell(20, ic(6, 7, svg`<path d="M.5 .5h5" stroke="#fff"/><path d="M0 3h6L3 6z" fill="#fff"/>`))}
          ${gap(558)}${t(540, "Otchet_LR3 (1).docx [Режим ограниченной функциональности] - Word (Сбой активации продукта)")}
          <span class="grow"></span>
          ${cell(46.5, ic(13, 11, svg`<path d="M.5 .5h12v10H.5zM.5 3h12M6.500 9V5M4.500 6.500l2-2 2 2" stroke="#a8bbd8"/>`))}
          ${cell(46.5, ic(10, 10, svg`<path d="M0 5.500h10" stroke="#a8bbd8"/>`))}
          ${cell(46.5, ic(10, 10, svg`<path d="M.5 2.500h7v7h-7zM2.500 2.500v-2h7v7h-2" stroke="#a8bbd8"/>`))}
          ${cell(46.5, ic(10, 10, svg`<path d="M0 0l10 10M10 0L0 10" stroke="#a8bbd8"/>`))}
        </div>
        <div class="tabs">
          ${gap(15)}${t(29, "Файл")}${gap(19)}<span class="home">${t(44, "Главная")}</span>${gap(15)}${t(42, "Вставка")}${gap(29)}${t(40, "Дизайн")}${gap(29)}${t(34, "Макет")}${gap(29)}${t(43, "Ссылки")}${gap(29)}${t(54, "Рассылки")}${gap(29)}${t(91, "Рецензирование")}${gap(29)}${t(20, "Вид")}${gap(29)}${t(54, "Office Tab")}
          ${gap(27)}${cell(16, ic(10, 14, svg`<path d="M3 10c0-2-2.500-3-2.500-5.500a4.500 4.500 0 0 1 9 0C9.500 7 7 8 7 10zM3 12.500h4" stroke="#fff" stroke-width="1.200"/>`))}${gap(3)}${t(126, "Что вы хотите сделать?", "ask")}
          <span class="grow"></span>${t(88, "Резуан Биджиев")}
          <span class="share">${cell(26, ic(14, 16, svg`<circle cx="7.500" cy="5" r="4.200" stroke="#fff" stroke-width="1.400"/><path d="M.7 15c.3-3.500 2-5.500 4.500-6.200M11 9v6M8 12h6" stroke="#fff" stroke-width="1.400"/>`))}${t(81, "Общий доступ")}</span>
        </div>
      </div>

      <div class="ribbon">
        ${this.grp(199, 77, "Буфер обмена", html`<div class="body clip">
          <div class="paste">${ic(28, 32, svg`<rect x="0" y="3" width="23" height="27" rx="1" fill="#eec57f"/><path d="M5 3h3c0-4 8-4 8 0h3v5H5z" fill="#666"/><path d="M14.500 12.500h8l5 5v13h-13z" fill="#fff" stroke="#777"/><path d="M22.500 12.500v5h5" stroke="#777"/>`)}${t(48, "Вставить")}${ic(6, 3, svg`<path d="M0 0h6L3 3z" fill="#666"/>`)}</div>
          <div class="col">
            <div class="item dis">${cell(22, ic(14, 15, svg`<path d="M3 0l7 10M11 0L4 10" stroke="#aaa" stroke-width="1.500"/><circle cx="3" cy="12" r="2.300" stroke="#aaa" stroke-width="1.300"/><circle cx="11" cy="12" r="2.300" stroke="#aaa" stroke-width="1.300"/>`))}${t(51, "Вырезать")}</div>
            <div class="item dis">${cell(22, ic(15, 14, svg`<path d="M.5 .5h6l2 2v7h-8zM6 4.500h5l3 3v6H6z" fill="#f1f1f1" stroke="#aaa"/><path d="M2 4h3M2 6h3M8 8.500h4M8 10.500h4" stroke="#aaa"/>`))}${t(65, "Копировать")}</div>
            <div class="item">${cell(22, ic(16, 13, svg`<path d="M0 4l6-1 4 5-5 5z" fill="#eec57f"/><path d="M6 3l3-2 3 5-3 2z" fill="#666"/><path d="M10 3l4-3 2 2-4 3z" fill="#444"/>`))}${t(108, "Формат по образцу")}</div>
          </div></div>`)}
        ${this.grp(266, 39, "Шрифт", html`<div class="body tools">
          <div class="row">${gap(4)}<span class="combo" style="width:86px"><span class="tx">${t(67, "Times New R")}</span>${ic(6, 3, svg`<path d="M0 0h6L3 3z" fill="#666"/>`)}</span><span class="combo" style="width:56px">14${ic(6, 3, svg`<path d="M0 0h6L3 3z" fill="#666"/>`)}</span>
            ${cell(24, html`<span class="lg">A</span>${ic(5, 12, svg`<path d="M0 3h5L2.500 0z" fill=${b}/>`)}`)}${cell(20, html`<span>A</span>${ic(5, 12, svg`<path d="M0 0h5L2.500 3z" fill=${b}/>`)}`)}${this.vs(8)}${cell(22, html`<span>Aa</span>`)}${this.arr(8)}${this.vs(17)}
            ${cell(16, ic(15, 15, svg`<path d="M1 9L4 .7 7 9M2 6.500h4" stroke="#555" stroke-width="1.300"/><path d="M4 10l6-6 5 5-6 6z" fill="#e88a9a"/>`))}</div>
          <div class="row">${gap(5)}${cell(20, html`<span class="bb">Ж</span>`)}${cell(21, html`<span class="bb it">К</span>`)}${cell(25, html`<span class="bb un">Ч</span>`)}${this.arr(9)}${cell(26, html`<span class="st">abc</span>`)}
            ${cell(18, html`<span class="bb">x</span><span class="sm sub">2</span>`)}${cell(25, html`<span class="bb">x</span><span class="sm sup">2</span>`)}${this.vs(8)}${cell(21, html`<span class="ol">A</span>`)}${this.arr(8)}
            ${cell(28, html`<span class="hl">ab</span>`)}${this.arr(7)}${cell(27, html`<span class="rd">A</span>`)}${this.arr(7)}</div></div>`)}
        ${this.grp(224, 32, "Абзац", html`<div class="body tools">
          <div class="row">${gap(3)}${cell(23, ic(14, 14, svg`<path d="M5 2h9M5 7h9M5 12h9" stroke="#555"/><path d="M0 1h2.500v2.500H0zM0 6h2.500v2.500H0zM0 11h2.500v2.500H0z" fill=${b}/>`))}${this.arr(9)}
            ${cell(26, ic(14, 14, svg`<path d="M5 2h9M5 7h9M5 12h9" stroke="#555"/><path d="M1.500 0v4M.5 5.500h2v3M.5 10.500h2v3h-2" stroke=${b}/>`))}${this.arr(8)}
            ${cell(25, ic(16, 14, svg`<path d="M4 2h10M7 7h8M11 12h5" stroke="#555"/><path d="M1.500 0v4M4 6h1.500v3H4M8.500 10v4" stroke=${b}/>`))}${this.arr(8)}${this.vs(15)}
            ${cell(18, ic(16, 12, svg`<path d="M2 .5h14M8 3.500h8M8 6.500h8M2 10.500h14" stroke="#555"/><path d="M7 5.500H2M4 3L1 5.500 4 8" stroke=${b} stroke-width="1.600"/>`))}${cell(24, ic(16, 12, svg`<path d="M2 .5h14M8 3.500h8M8 6.500h8M2 10.500h14" stroke="#555"/><path d="M0 5.500h5M3.500 3l3 2.500-3 2.500" stroke=${b} stroke-width="1.600"/>`))}${this.vs(10)}
            ${cell(18, ic(14, 15, svg`<path d="M1 6.500L3.500 .5 6 6.500M2 5h3" stroke=${b} stroke-width="1.200"/><path d="M5.500 14.500v-6H3a1.500 1.500 0 0 0 0 3h2M3.500 11.500l-2 3" stroke="#8f4a9b" stroke-width="1.200"/><path d="M10.500 0v14M8 11l2.500 3 2.500-3" stroke="#555" stroke-width="1.200"/>`))}${this.vs(12)}${cell(19, html`<span class="pil">¶</span>`)}</div>
          <div class="row">${gap(4)}${cell(22, this.bars([[0, 15], [0, 10], [0, 15], [0, 10], [0, 15]]))}${cell(22, this.bars([[0, 15], [3, 9], [0, 15], [3, 9], [0, 15]]), "sel")}${cell(22, this.bars([[0, 15], [5, 10], [0, 15], [5, 10], [0, 15]]))}${cell(22, this.bars([[0, 15], [0, 15], [0, 15], [0, 15], [0, 15]]))}${this.vs(9)}
            ${cell(21, ic(15, 16, svg`<path d="M6 3.500h9M6 6.500h9M6 9.500h9M6 12.500h9" stroke="#555"/><path d="M2.500 1v14M.5 3.500l2-2.500 2 2.500M.5 12.500l2 2.500 2-2.500" stroke=${b} stroke-width="1.300"/>`))}${this.arr(8)}${this.vs(11)}
            ${cell(25, ic(17, 15, svg`<path d="M3 6l5-5 5 5-5 4z" stroke="#555" stroke-width="1.200"/><path d="M13 3c3 1 3 5 1 7z" fill=${b}/><path d="M.5 11.500h15v3H.5z" fill="#fff" stroke="#666"/>`))}${this.arr(9)}
            ${cell(23, ic(13, 13, svg`<path d="M.5 .5h12v12H.5zM6.500 0v13M0 6.500h13" stroke="#777" stroke-dasharray="1 1"/><path d="M0 12.500h13" stroke="#333"/>`))}${this.arr(12)}</div></div>`)}
        ${this.grp(1038, 32, "Стили", html`<div class="body"><div class="gal">
          ${styles.map(([c, w, p, l, lw], i) => html`<div class="sty ${i === 0 ? "on" : ""}"><div class="pv ${c}">${t(w, p)}</div><div class="lb">${t(lw, l)}</div></div>`)}
          <div class="gs"><span>${ic(6, 3, svg`<path d="M0 3h6L3 0z" fill="#bbb"/>`)}</span><span>${ic(6, 3, svg`<path d="M0 0h6L3 3z" fill="#666"/>`)}</span><span>${ic(7, 7, svg`<path d="M0 .5h7" stroke="#666"/><path d="M.5 3h6L3.500 6z" fill="#666"/>`)}</span></div>
        </div></div>`)}
        ${this.grp(99, 88, "Редактирование", html`<div class="body ed">
          <div class="item">${cell(22, ic(14, 13, svg`<circle cx="9" cy="5" r="4" stroke=${b} stroke-width="1.600"/><path d="M6 8l-5 4.500" stroke=${b} stroke-width="2.500"/>`))}${t(34, "Найти")}${gap(9)}${this.arr(8)}</div>
          <div class="item">${cell(22, html`<svg width="16" height="15" viewBox="0 0 16 15"><text x="0" y="7" font-size="9" font-weight="700" fill="#666">a<tspan fill="#8f4a9b">b</tspan></text><text x="6" y="14.500" font-size="9" font-weight="700" fill="#555">a<tspan fill=${b}>c</tspan></text><path d="M1 9v2.500h3" stroke=${b} fill="none"/></svg>`)}${t(53, "Заменить")}</div>
          <div class="item">${cell(22, ic(10, 15, svg`<path d="M1 1v11l2.700-2.500L5.500 14l2-1-2-4h3.500z" fill="#fff" stroke="#666"/>`))}${t(53, "Выделить")}${gap(2)}${this.arr(8)}</div></div>`, false)}
        <div class="rend">${ic(9, 6, svg`<path d="M.5 5.500l4-4 4 4" stroke="#666" stroke-width="1.800"/>`)}</div>
      </div>

      <div class="docs">
        <div class="doc">${ic(17, 16, svg`<path d="M6 .5h8l2.500 2.500v12.500H6z" fill="#fff" stroke="#555"/><path d="M9 5h6M9 8h6M9 11h6" stroke="#2b579a"/><rect y="3" width="9" height="10" fill="#2b579a"/><path d="M1.500 5.500l1.300 5 1.700-4 1.700 4 1.300-5" stroke="#fff"/>`)}${gap(3)}${t(399, "Otchet_LR3 (1).docx [Режим ограниченной функциональности]")}${gap(10)}${ic(8, 8, svg`<path d="M.5 .5l7 7M7.500 .5l-7 7" stroke="#999" stroke-width="1.800"/>`)}</div>
        <div class="nt"></div><span class="grow"></span>
        <div class="db">${ic(8, 4, svg`<path d="M0 0h8L4 4z" fill="#000"/>`)}</div><div class="db">${ic(8, 8, svg`<path d="M.5 .5l7 7M7.500 .5l-7 7" stroke="#000" stroke-width="2.200"/>`)}</div>
      </div>

      <div class="ruler"><div class="lbox">${ic(6, 7, svg`<path d="M1 0v6h5" stroke="#555" stroke-width="1.800"/>`)}</div>${this.hruler()}</div>
      <div class="work">
        <div class="vr">${this.vruler()}</div>
        <div class="pages">
          <div class="pg top p1"><div>Выполнили студенты группы</div><div class="jj">ИВБО-02-15 &nbsp;Мусин Антон и Борзых</div><div>Никита</div><div class="m1">Принял: доцент кафедры Басок Б.М.</div><div class="m2 off">Лабораторная работа выполнена</div><div class="m3">«25» марта 2018</div><div class="m3">«Зачтено»</div><div class="m3 off">«27» марта 2018</div><div class="m4">Москва, 2018</div></div>
          <div class="pg top"><div class="hd">${sq("Системные")} ${sq("функциональные")} ${sq("тесты")}</div>${this.table([
            { h: 35, a: [L("Информация о тестовом случае")] },
            { h: 88, wide: true, a: [L("Идентификатор"), L("тестового случая")], b: [J("Проверка ввода чисел, их количества, на разрядность"), J("чисел, проверка работы вывода окна при отсутствии"), L(html`<span class="pr">простых чисел  (</span>${sq("CodedNoNumber")})`)] },
            { h: 24, a: [L("Владелец теста")], b: [L("Мусин А.")] },
            { h: 71, wide: true, a: [J("Дата создания"), J("последней версии"), L("тестового случая")], b: [L("24.03.2018")] },
            { h: 48, a: [L("Местонахождение"), L("тестового случая")], b: [L("Test server:"), L("C:\\LR1.Tests\\CodedUITest1.cs")] },
            { h: 47, a: [L("Тестируемое"), L("требование")], b: [L("Задание на разработку программы п.2 - п.5")] }])}<div class="num">2</div></div>
          <div class="pg l3">${this.table([
            { h: 88, a: [L("Цель тестирования")], b: [J("Проверить открытие окна ошибки, связанное с"), L("отсутствием простых чисел")] },
            { h: 71, a: [L("Конфигурация"), L("средств"), L("тестирования")], b: [J("Конфигурация идентична конфигурации"), J("программно-аппаратных средств, необходимой для"), L("эксплуатации программы")] },
            { h: 140, a: [L("Взаимозависимость"), L("тестовых случаев")], b: [J("Перед выполнением данного теста должны быть"), J("выполнены все модульные и интеграционные тесты")] }])}</div>
          <div class="pg l4">${this.table([
            { h: 38, a: [L("Информация о тестовом случае")] },
            { h: 102, a: [L("Идентификатор"), L("тестового случая")], b: [J("Проверка ввода чисел, их количества, на разрядность"), J("чисел, проверка работы вывода простых чисел, где"), J("первая цифра в числе меньше последней"), L(html`(${sq("CodedMoreOneDigit")})`)] },
            { h: 37, a: [L("Владелец теста")], b: [L("Мусин А.")] }], "lo")}${this.table([
            { h: 100, a: [L("Дата")], b: [L("24.03.2018")] }], "next")}</div>
        </div>
      </div>

      <div class="status">
        ${gap(8)}${t(85, "Страница 1 из 7")}${gap(18)}${t(83, "Число слов: 950")}${gap(19)}${ic(16, 13, svg`<path d="M8 2.500L6 .5H.5v11H6l2 2V2.500L10 .5h4.500M8 13.500l2-2h4.500M10 3.500l4 6M14 3.500l-4 6" stroke="#666"/>`)}${gap(17)}${t(42, "русский")}
        <span class="grow"></span>
        ${cell(38, ic(14, 13, svg`<path d="M7 2L5.500 .5H.5v11h5L7 13l1.500-1.500h5V.5h-5zM7 2v11M2 3.500h3M2 5.500h3M2 7.500h3M2 9.500h3M9 3.500h3M9 5.500h3M9 7.500h3M9 9.500h3" stroke="#666"/>`))}
        ${cell(38, ic(14, 13, svg`<path d="M.5 .5h13v12H.5zM2.500 3h9M2.500 5h9M2.500 7h9M2.500 9h9M2.500 11h9" stroke="#555"/>`), "on")}
        ${cell(37, ic(15, 13, svg`<path d="M6 11.500H.5V.5h11v4M2.500 3h7M2.500 5h5M2.500 7h3M2.500 9h3" stroke="#666"/><circle cx="10.500" cy="9" r="3.800" fill="#888"/><path d="M8.500 7l2 1.500-1 2.500" stroke="#fff"/>`))}
        ${gap(6)}${ic(6, 2, svg`<path d="M0 1h6" stroke="#444" stroke-width="2"/>`)}${gap(3)}
        ${ic(101, 12, svg`<path d="M0 6.500h101" stroke="#999"/><path d="M49 .5h3.500v11.500H49z" fill="#555"/>`)}${gap(3)}
        ${ic(9, 9, svg`<path d="M0 4.500h9M4.500 0v9" stroke="#444" stroke-width="1.700"/>`)}${gap(15)}${t(27, "100%")}${gap(8)}
      </div>
      <div class="wm">${t(183, "Активация Windows", "w1")}${t(453, 'Чтобы активировать Windows, перейдите в раздел "Параметры".', "w2")}</div>
      <div class="shade"></div>`;
  }
}

/* ---------- desktop ---------- */

@customElement("app-root")
class AppRoot extends LitElement {
  static styles = [base, css`
    :host { display: block; width: 3286px; height: 1080px; background: #000; overflow: hidden; }
    .desk { display: flex; }
    .left { width: 1366px; height: 768px; position: relative; display: flex; flex-direction: column; justify-content: flex-end; overflow: hidden;
      background: linear-gradient(#050304 0, #060304 110px, #12090c 180px, #0a0507 232px, #3f0f19 270px, #5a1622 350px, #701a26 425px, #180a0d 445px, #0d0609 600px, #150a0c 728px); }
    .right { width: 1920px; height: 1080px; display: flex; flex-direction: column; }
    chrome-window { position: absolute; left: 7px; top: 0; width: 1352px; height: 729px; }
    word-window { height: 1040px; }
    .fr { position: absolute; left: 2px; width: 5px; overflow: hidden; color: #fff; font: 12px "Open Sans", sans-serif; }
    .f1 { top: 258px; } .f2 { top: 461px; } .f3 { top: 562px; }
  `];
  render() {
    return html`<div class="desk">
      <div class="left"><span class="fr f1">J</span><span class="fr f2">C</span><span class="fr f3">C</span><chrome-window></chrome-window><task-bar></task-bar></div>
      <div class="right"><word-window></word-window><task-bar tray></task-bar></div>
    </div>`;
  }
}
